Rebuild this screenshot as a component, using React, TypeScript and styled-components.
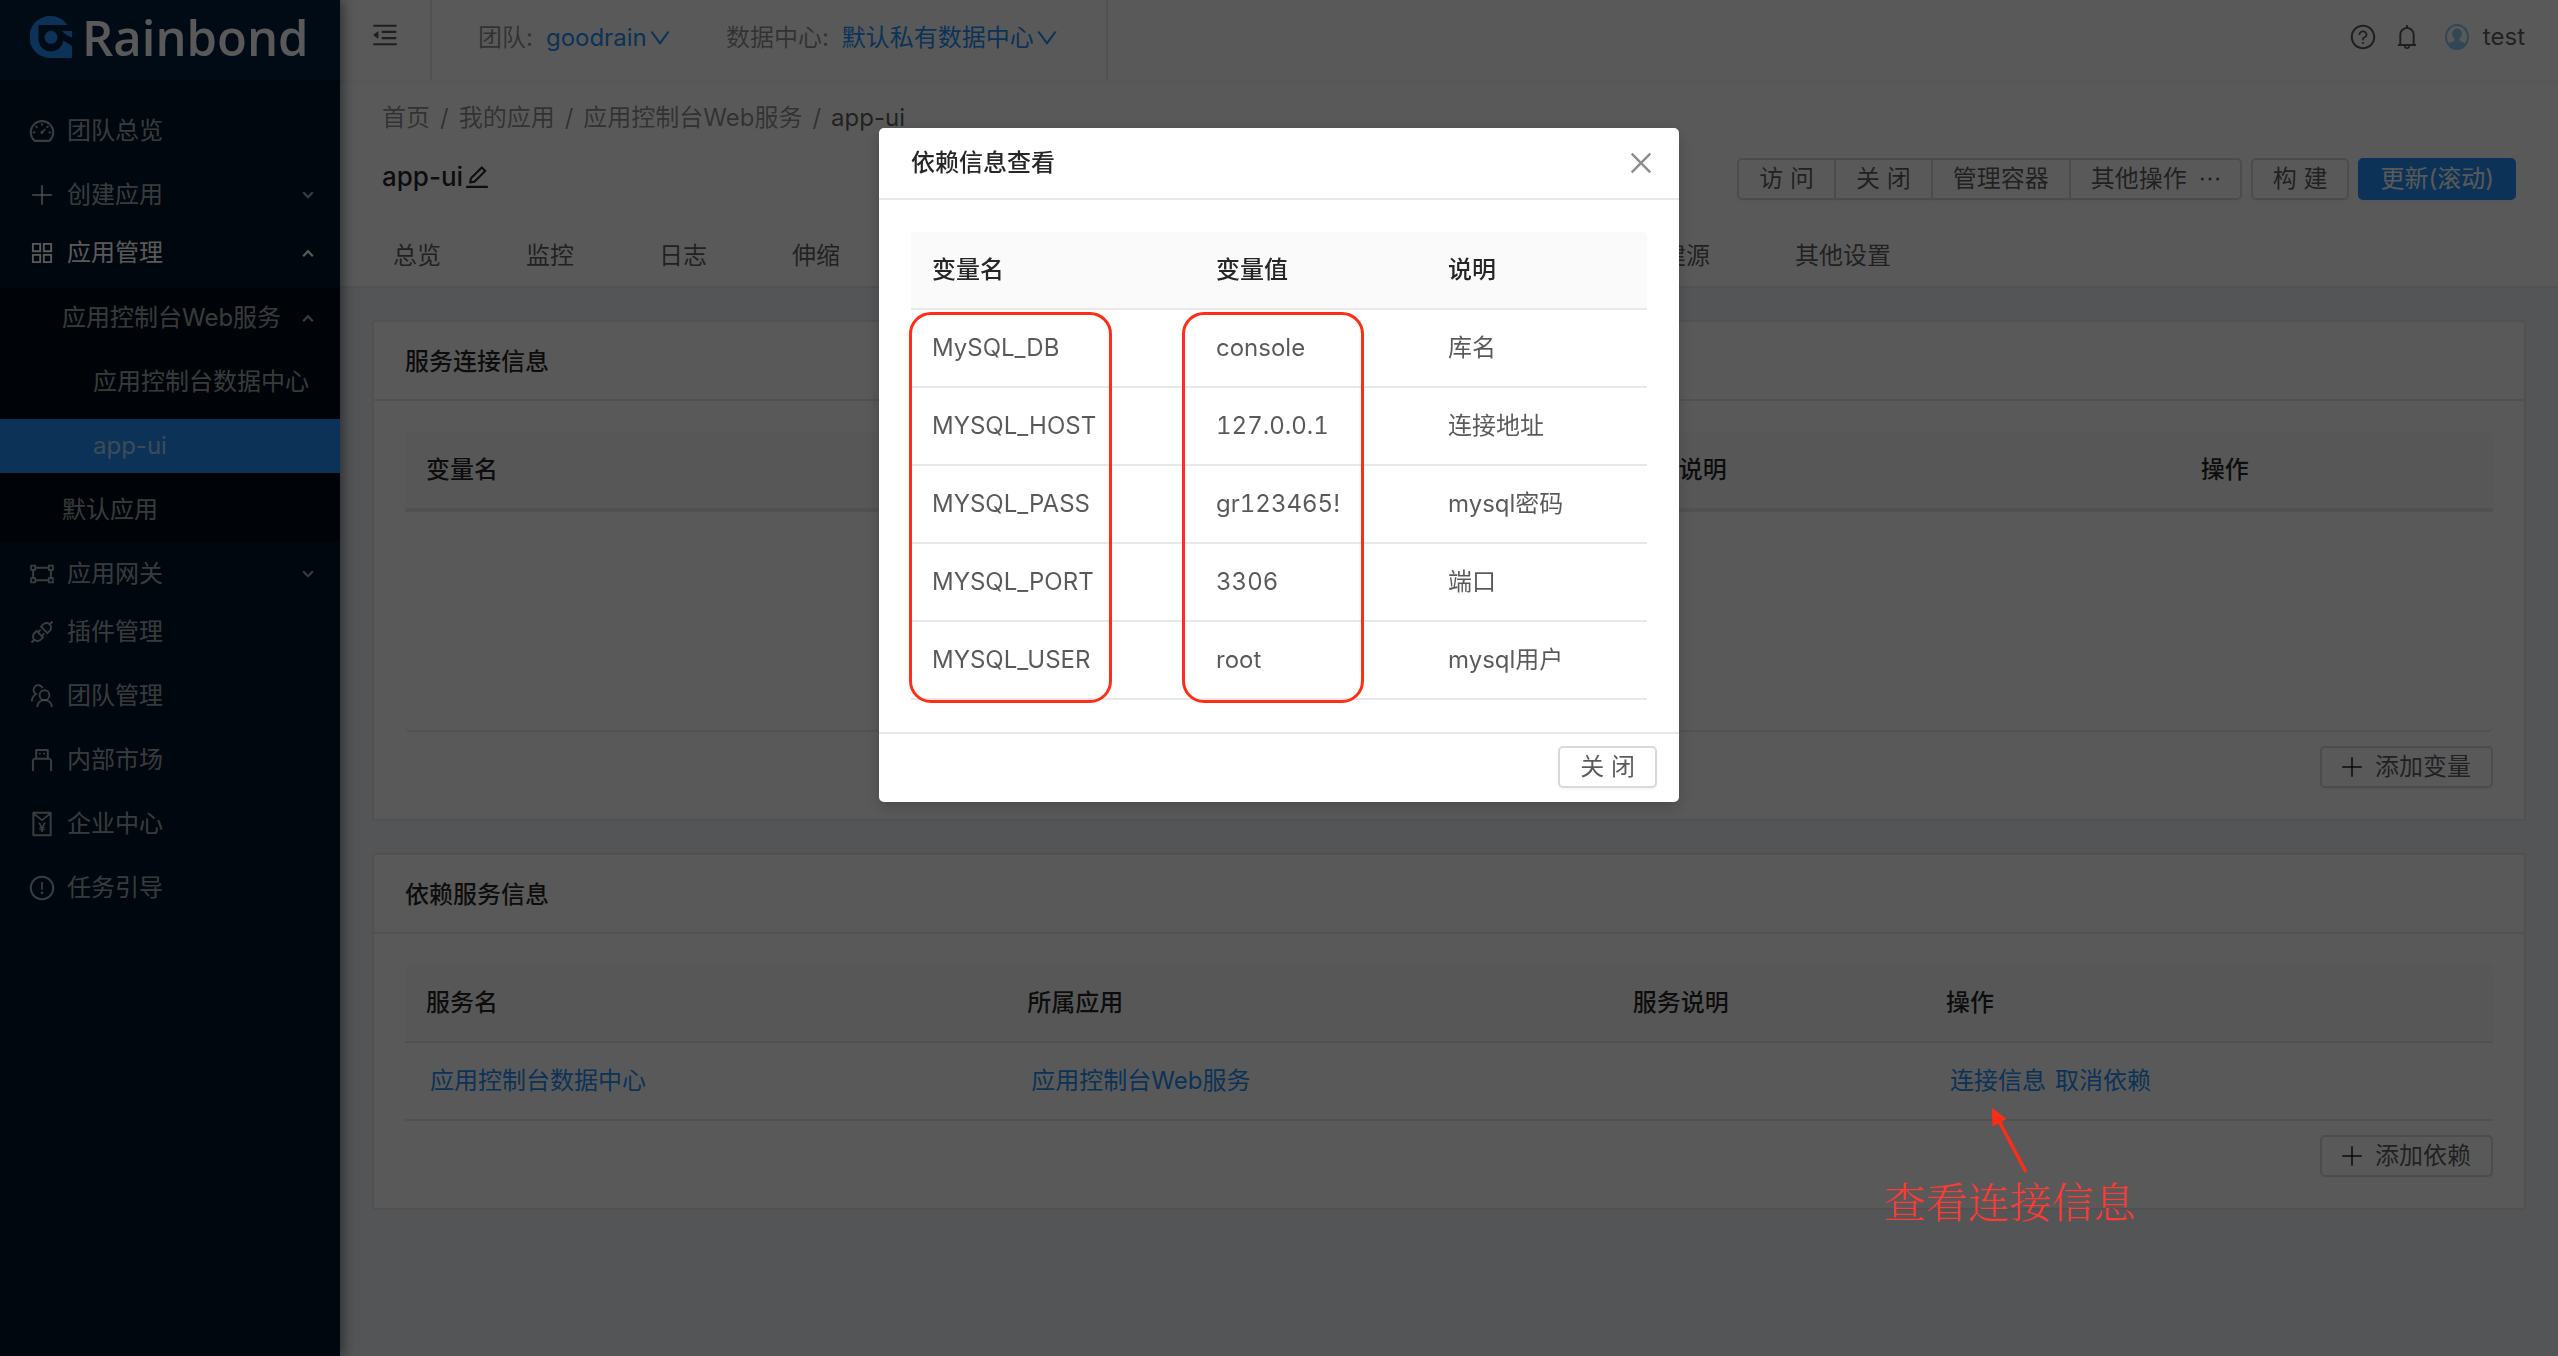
import React from "react";
import styled, { createGlobalStyle, css } from "styled-components";
import {
  AiOutlineApi,
  AiOutlineAppstore,
  AiOutlineBell,
  AiOutlineClose,
  AiOutlineDashboard,
  AiOutlineDown,
  AiOutlineEdit,
  AiOutlineEllipsis,
  AiOutlineExclamationCircle,
  AiOutlineGateway,
  AiOutlineMenuFold,
  AiOutlinePlus,
  AiOutlineQuestionCircle,
  AiOutlineRedEnvelope,
  AiOutlineUsb,
} from "react-icons/ai";

const color = {
  primary: "#2490fa",
  heading: "rgba(0, 0, 0, 0.85)",
  text: "rgba(0, 0, 0, 0.65)",
  muted: "rgba(0, 0, 0, 0.45)",
  line: "#e8e8e8",
  control: "#d9d9d9",
  mark: "#ff2d16",
};

const GlobalStyle = createGlobalStyle`
  * { box-sizing: border-box; }
  body {
    margin: 0;
    background: #f0f2f5;
    color: ${color.text};
    font-family: Inter, "Noto Sans CJK SC", sans-serif;
    font-size: 24px;
    line-height: 36px;
  }
  a { color: inherit; text-decoration: none; }
  button, select { font: inherit; color: inherit; }
`;

const Page = styled.div`
  position: relative;
  display: flex;
  min-height: 100vh;
`;

/* ---------- sidebar ---------- */

const Sidebar = styled.aside`
  position: relative;
  z-index: 2;
  flex: 0 0 340px;
  min-width: 0;
  background: #001529;
  color: rgba(255, 255, 255, 0.65);
  box-shadow: 3px 0 12px rgba(0, 21, 41, 0.5);
`;

const Brand = styled.a`
  display: flex;
  align-items: center;
  gap: 10px;
  height: 80px;
  padding: 0 0 6px 30px;
  background: #002140;
`;

const BrandName = styled.span`
  color: #fff;
  font-family: "Open Sans", "Noto Sans", sans-serif;
  font-size: 49px;
  font-weight: 600;
  line-height: 74px;
`;

const Menu = styled.nav`
  padding-top: 24px;
`;

const SubMenu = styled.div`
  margin: 8px 0 5px;
  padding: 3px 0 1px;
  background: #000c17;
`;

type ItemProps = { $indent?: number; $open?: boolean; $selected?: boolean; $tight?: boolean };

const MenuItem = styled.a<ItemProps>`
  display: flex;
  align-items: center;
  gap: 11px;
  height: 54px;
  margin-bottom: ${(p) => (p.$tight ? 4 : 10)}px;
  padding: 0 26px 0 ${(p) => p.$indent ?? 28}px;
  white-space: nowrap;
  ${(p) => p.$open && css`color: #fff;`}
  ${(p) => p.$selected && css`background: ${color.primary};`}
`;

const MenuLabel = styled.span`
  flex: 1;
`;

/* ---------- top bar ---------- */

const Main = styled.div`
  flex: 1;
  min-width: 0;
`;

const TopBar = styled.header`
  position: relative;
  z-index: 1;
  display: flex;
  height: 80px;
  background: #fff;
  box-shadow: 0 3px 0 #f5f9f9;
`;

const FoldButton = styled.button`
  display: flex;
  align-items: center;
  padding: 0 30px 10px;
  border: 0;
  border-right: 2px solid ${color.line};
  background: none;
`;

const Pickers = styled.div`
  display: flex;
  align-items: center;
  gap: 53px;
  padding: 0 46px 4px;
  border-right: 2px solid ${color.line};
`;

const Picker = styled.div`
  display: flex;
  align-items: center;
  gap: 13px;
  color: ${color.muted};
`;

const PickerControl = styled.span`
  display: flex;
  align-items: center;
  color: ${color.primary};
`;

const PickerSelect = styled.select`
  padding: 0;
  border: 0;
  background: none;
  appearance: none;
`;

const Tools = styled.div`
  display: flex;
  align-items: center;
  gap: 16px;
  margin-left: auto;
  padding: 0 33px 6px 0;
`;

const IconButton = styled.button`
  display: flex;
  padding: 0;
  border: 0;
  background: none;
`;

const Account = styled.a`
  display: flex;
  align-items: center;
  gap: 14px;
  margin-left: 8px;
`;

/* ---------- page header ---------- */

const PageHead = styled.section`
  padding: 20px 42px 0;
  border-bottom: 2px solid ${color.line};
  background: #fff;
`;

const Crumbs = styled.nav`
  display: flex;
  gap: 10px;
  color: ${color.muted};
`;

const CrumbCurrent = styled.span`
  color: ${color.text};
`;

const TitleRow = styled.div`
  display: flex;
  align-items: center;
  justify-content: space-between;
  margin-top: 22px;
`;

const Title = styled.h1`
  display: flex;
  align-items: center;
  margin: 0;
  padding-bottom: 4px;
  color: ${color.heading};
  font-size: 26px;
  font-weight: 500;
  line-height: 36px;
`;

const Actions = styled.div`
  display: flex;
  gap: 9px;
`;

const ButtonGroup = styled.div`
  display: flex;

  & > button:not(:first-child) {
    margin-left: -2px;
    border-top-left-radius: 0;
    border-bottom-left-radius: 0;
  }
  & > button:not(:last-child) {
    border-top-right-radius: 0;
    border-bottom-right-radius: 0;
  }
`;

type ButtonProps = { $primary?: boolean; $icon?: "leading" | "trailing" };

const Button = styled.button<ButtonProps>`
  display: flex;
  align-items: center;
  gap: 9px;
  height: 42px;
  padding-left: ${(p) => (p.$icon === "leading" ? 16 : 20)}px;
  padding-right: ${(p) => (p.$icon === "trailing" ? 16 : 20)}px;
  border: 2px solid ${(p) => (p.$primary ? color.primary : color.control)};
  border-radius: 5px;
  background: ${(p) => (p.$primary ? color.primary : "#fff")};
  color: ${(p) => (p.$primary ? "#fff" : color.text)};
  box-shadow: 0 2px 2px rgba(0, 0, 0, 0.03);
  line-height: 36px;
  white-space: nowrap;
`;

const Tabs = styled.div`
  display: flex;
  gap: 33px;
  margin: 26px -15px 0;
`;

const Tab = styled.button`
  height: 60px;
  padding: 0 26px;
  border: 0;
  background: none;
  white-space: nowrap;
`;

/* ---------- cards and tables ---------- */

const Content = styled.main`
  display: flex;
  flex-direction: column;
  gap: 32px;
  padding: 32px;
`;

const Card = styled.section`
  border: 2px solid ${color.line};
  border-radius: 3px;
  background: #fff;
`;

const CardTitle = styled.h2`
  height: 79px;
  margin: 0;
  padding: 0 31px;
  border-bottom: 2px solid ${color.line};
  color: ${color.heading};
  font-size: 24px;
  font-weight: 500;
  line-height: 79px;
`;

const CardBody = styled.div`
  padding: 31px;
`;

const Table = styled.table`
  width: 100%;
  border-collapse: separate;
  border-spacing: 0;
  table-layout: fixed;
  text-align: left;
  font-variant-numeric: tabular-nums;
`;

const Th = styled.th<{ $width?: string }>`
  width: ${(p) => p.$width ?? "auto"};
  height: 78px;
  padding: 0 21px;
  border-bottom: 2px solid ${color.line};
  background: #fafafa;
  color: ${color.heading};
  font-weight: 500;

  &:first-child { border-top-left-radius: 5px; }
  &:last-child { border-top-right-radius: 5px; }
`;

const Td = styled.td`
  height: 78px;
  padding: 0 21px;
  border-bottom: 2px solid ${color.line};
  white-space: nowrap;
`;

const EmptyRows = styled.div`
  height: 222px;
  border-top: 2px solid ${color.line};
  border-bottom: 2px solid ${color.line};
  border-radius: 0 0 5px 5px;
`;

const TableFoot = styled.div`
  display: flex;
  justify-content: flex-end;
  padding-top: 14px;
`;

const CellLinks = styled.span`
  display: flex;
  gap: 9px;
  padding-left: 4px;
  color: ${color.primary};
`;

/* ---------- dialog ---------- */

const Mask = styled.div`
  position: fixed;
  inset: 0;
  z-index: 10;
  display: flex;
  align-items: flex-start;
  justify-content: center;
  padding-top: 128px;
  background: rgba(0, 0, 0, 0.65);
`;

const Dialog = styled.div`
  position: relative;
  width: 800px;
  border-radius: 5px;
  background: #fff;
  box-shadow: 0 5px 16px rgba(0, 0, 0, 0.2);
`;

const DialogHead = styled.div`
  display: flex;
  align-items: center;
  justify-content: space-between;
  height: 72px;
  padding: 0 23px 0 32px;
  border-bottom: 2px solid ${color.line};
`;

const DialogTitle = styled.h2`
  margin: 0;
  color: ${color.heading};
  font-size: 24px;
  font-weight: 500;
  line-height: 36px;
`;

const DialogBody = styled.div`
  padding: 32px;
`;

const DialogFoot = styled.div`
  display: flex;
  justify-content: flex-end;
  padding: 12px 22px 14px;
  border-top: 2px solid ${color.line};
`;

const CloseButton = styled(IconButton)`
  color: ${color.muted};
`;

/* ---------- hand marks over the page ---------- */

const MarkBox = styled.div<{ $left: number; $width: number }>`
  position: absolute;
  top: 184px;
  left: ${(p) => p.$left}px;
  width: ${(p) => p.$width}px;
  height: 391px;
  border: 3px solid ${color.mark};
  border-radius: 22px;
  pointer-events: none;
`;

const Note = styled.div`
  position: absolute;
  top: 1108px;
  right: 422px;
  z-index: 12;
  display: flex;
  flex-direction: column;
  align-items: center;
  color: #ff3b35;
  font-family: "Noto Serif CJK SC", "Noto Sans CJK SC", serif;
  font-size: 42px;
  font-weight: 300;
  line-height: 52px;
`;

/* ---------- drawings ---------- */

const Logo = () => (
  <svg width="42" height="42" viewBox="0 0 42 42" aria-hidden="true">
    <path
      fill={color.primary}
      d="M37.500 9H8.500V21.500A12.500 12.500 0 0 0 31.600 29.500C32.500 28 33.200 26 33.500 24.500L42 30V42H21A21 21 0 1 1 37.500 9Z"
    />
    <path fill={color.primary} d="M32 15H42V21.500C38.500 20.500 35 18.500 32 15Z" />
    <circle cx="21" cy="21.300" r="6.500" fill={color.primary} />
  </svg>
);

const Caret = ({ up = false }: { up?: boolean }) => (
  <svg width="12" height="12" viewBox="0 0 12 12" fill="none" stroke="currentColor" strokeWidth="2.200" aria-hidden="true">
    <path d={up ? "M1.200 9.200L6 4.200L10.800 9.200" : "M1.200 3.200L6 8.200L10.800 3.200"} />
  </svg>
);

const TeamIcon = () => (
  <svg width="28" height="28" viewBox="0 0 28 28" fill="none" stroke="currentColor" strokeWidth="1.900" aria-hidden="true">
    <circle cx="16.500" cy="13.200" r="4.900" />
    <path d="M9.300 25c.3-4 3-6.900 7.200-6.900s7 2.900 7.400 6.900" />
    <path d="M14.600 6.100A4.700 4.700 0 1 0 8 12c-2.400 1.400-4 4.100-4.300 7.400" />
  </svg>
);

const Avatar = () => (
  <svg width="24" height="26" viewBox="0 0 24 26" aria-hidden="true">
    <ellipse cx="12" cy="13" rx="11" ry="12" fill="none" stroke="#8ccbf5" strokeWidth="2" />
    <path
      fill="#8ccbf5"
      d="M12 4.500c3 0 4.800 2.200 4.800 5.200 0 2-.9 3.900-2.300 4.900v1.900c1.500 1.200 4.300 1.700 5.900 3.500C18.500 23.500 15.500 25 12 25s-6.500-1.500-8.400-5c1.600-1.800 4.400-2.300 5.900-3.500v-1.900c-1.400-1-2.300-2.900-2.300-4.900 0-3 1.800-5.200 4.800-5.200z"
    />
  </svg>
);

const Arrow = () => (
  <svg width="40" height="66" viewBox="0 0 40 66" aria-hidden="true">
    <path d="M9 13L36 64" stroke={color.mark} strokeWidth="3.500" fill="none" />
    <path d="M2 0L16.500 11L2.500 18.500Z" fill={color.mark} />
  </svg>
);

/* ---------- data ---------- */

const tabs = ["总览", "监控", "日志", "伸缩", "环境配置", "依赖", "存储", "端口", "插件", "构建源", "其他设置"];

const variables = [
  ["MySQL_DB", "console", "库名"],
  ["MYSQL_HOST", "127.0.0.1", "连接地址"],
  ["MYSQL_PASS", "gr123465!", "mysql密码"],
  ["MYSQL_PORT", "3306", "端口"],
  ["MYSQL_USER", "root", "mysql用户"],
];

const lowerMenu = [
  { label: "插件管理", icon: <AiOutlineApi size={28} /> },
  { label: "团队管理", icon: <TeamIcon /> },
  { label: "内部市场", icon: <AiOutlineUsb size={28} /> },
  { label: "企业中心", icon: <AiOutlineRedEnvelope size={28} /> },
  { label: "任务引导", icon: <AiOutlineExclamationCircle size={28} /> },
];

export default function App() {
  return (
    <>
      <GlobalStyle />
      <Page>
        <Sidebar>
          <Brand href="#">
            <Logo />
            <BrandName>Rainbond</BrandName>
          </Brand>
          <Menu>
            <MenuItem href="#">
              <AiOutlineDashboard size={28} />
              <MenuLabel>团队总览</MenuLabel>
            </MenuItem>
            <MenuItem href="#" $tight>
              <AiOutlinePlus size={28} />
              <MenuLabel>创建应用</MenuLabel>
              <Caret />
            </MenuItem>
            <MenuItem href="#" $open $tight>
              <AiOutlineAppstore size={28} />
              <MenuLabel>应用管理</MenuLabel>
              <Caret up />
            </MenuItem>
            <SubMenu>
              <MenuItem href="#" $indent={62}>
                <MenuLabel>应用控制台Web服务</MenuLabel>
                <Caret up />
              </MenuItem>
              <MenuItem href="#" $indent={93}>
                <MenuLabel>应用控制台数据中心</MenuLabel>
              </MenuItem>
              <MenuItem href="#" $indent={93} $selected>
                <MenuLabel>app-ui</MenuLabel>
              </MenuItem>
              <MenuItem href="#" $indent={62} $tight>
                <MenuLabel>默认应用</MenuLabel>
              </MenuItem>
            </SubMenu>
            <MenuItem href="#" $tight>
              <AiOutlineGateway size={28} />
              <MenuLabel>应用网关</MenuLabel>
              <Caret />
            </MenuItem>
            {lowerMenu.map((item) => (
              <MenuItem href="#" key={item.label}>
                {item.icon}
                <MenuLabel>{item.label}</MenuLabel>
              </MenuItem>
            ))}
          </Menu>
        </Sidebar>

        <Main>
          <TopBar>
            <FoldButton aria-label="收起菜单">
              <AiOutlineMenuFold size={30} />
            </FoldButton>
            <Pickers>
              <Picker>
                <label htmlFor="team">团队:</label>
                <PickerControl>
                  <PickerSelect id="team">
                    <option>goodrain</option>
                  </PickerSelect>
                  <AiOutlineDown size={26} />
                </PickerControl>
              </Picker>
              <Picker>
                <label htmlFor="region">数据中心:</label>
                <PickerControl>
                  <PickerSelect id="region">
                    <option>默认私有数据中心</option>
                  </PickerSelect>
                  <AiOutlineDown size={26} />
                </PickerControl>
              </Picker>
            </Pickers>
            <Tools>
              <IconButton aria-label="帮助">
                <AiOutlineQuestionCircle size={28} />
              </IconButton>
              <IconButton aria-label="通知">
                <AiOutlineBell size={28} />
              </IconButton>
              <Account href="#">
                <Avatar />
                test
              </Account>
            </Tools>
          </TopBar>

          <PageHead>
            <Crumbs>
              <a href="#">首页</a>
              <span>/</span>
              <a href="#">我的应用</a>
              <span>/</span>
              <a href="#">应用控制台Web服务</a>
              <span>/</span>
              <CrumbCurrent>app-ui</CrumbCurrent>
            </Crumbs>
            <TitleRow>
              <Title>
                app-ui
                <IconButton aria-label="编辑名称">
                  <AiOutlineEdit size={28} />
                </IconButton>
              </Title>
              <Actions>
                <ButtonGroup>
                  <Button>访 问</Button>
                  <Button>关 闭</Button>
                  <Button>管理容器</Button>
                  <Button $icon="trailing">
                    其他操作
                    <AiOutlineEllipsis size={28} />
                  </Button>
                </ButtonGroup>
                <Button>构 建</Button>
                <Button $primary>更新(滚动)</Button>
              </Actions>
            </TitleRow>
            <Tabs role="tablist">
              {tabs.map((name) => (
                <Tab role="tab" key={name}>
                  {name}
                </Tab>
              ))}
            </Tabs>
          </PageHead>

          <Content>
            <Card>
              <CardTitle>服务连接信息</CardTitle>
              <CardBody>
                <Table>
                  <thead>
                    <tr>
                      <Th $width="30%">变量名</Th>
                      <Th $width="30%">变量值</Th>
                      <Th $width="25%">说明</Th>
                      <Th $width="15%">操作</Th>
                    </tr>
                  </thead>
                </Table>
                <EmptyRows />
                <TableFoot>
                  <Button $icon="leading">
                    <AiOutlinePlus size={28} />
                    添加变量
                  </Button>
                </TableFoot>
              </CardBody>
            </Card>

            <Card>
              <CardTitle>依赖服务信息</CardTitle>
              <CardBody>
                <Table>
                  <thead>
                    <tr>
                      <Th $width="28.8%">服务名</Th>
                      <Th $width="29%">所属应用</Th>
                      <Th $width="15%">服务说明</Th>
                      <Th>操作</Th>
                    </tr>
                  </thead>
                  <tbody>
                    <tr>
                      <Td>
                        <CellLinks>
                          <a href="#">应用控制台数据中心</a>
                        </CellLinks>
                      </Td>
                      <Td>
                        <CellLinks>
                          <a href="#">应用控制台Web服务</a>
                        </CellLinks>
                      </Td>
                      <Td />
                      <Td>
                        <CellLinks>
                          <a href="#">连接信息</a>
                          <a href="#">取消依赖</a>
                        </CellLinks>
                      </Td>
                    </tr>
                  </tbody>
                </Table>
                <TableFoot>
                  <Button $icon="leading">
                    <AiOutlinePlus size={28} />
                    添加依赖
                  </Button>
                </TableFoot>
              </CardBody>
            </Card>
          </Content>
        </Main>

        <Mask>
          <Dialog role="dialog" aria-labelledby="dialog-title">
            <DialogHead>
              <DialogTitle id="dialog-title">依赖信息查看</DialogTitle>
              <CloseButton aria-label="关闭">
                <AiOutlineClose size={30} />
              </CloseButton>
            </DialogHead>
            <DialogBody>
              <Table>
                <thead>
                  <tr>
                    <Th $width="284px">变量名</Th>
                    <Th $width="232px">变量值</Th>
                    <Th>说明</Th>
                  </tr>
                </thead>
                <tbody>
                  {variables.map(([name, value, note]) => (
                    <tr key={name}>
                      <Td>{name}</Td>
                      <Td>{value}</Td>
                      <Td>{note}</Td>
                    </tr>
                  ))}
                </tbody>
              </Table>
            </DialogBody>
            <DialogFoot>
              <Button>关 闭</Button>
            </DialogFoot>
            <MarkBox $left={30} $width={203} />
            <MarkBox $left={303} $width={182} />
          </Dialog>
        </Mask>

        <Note>
          <Arrow />
          查看连接信息
        </Note>
      </Page>
    </>
  );
}
